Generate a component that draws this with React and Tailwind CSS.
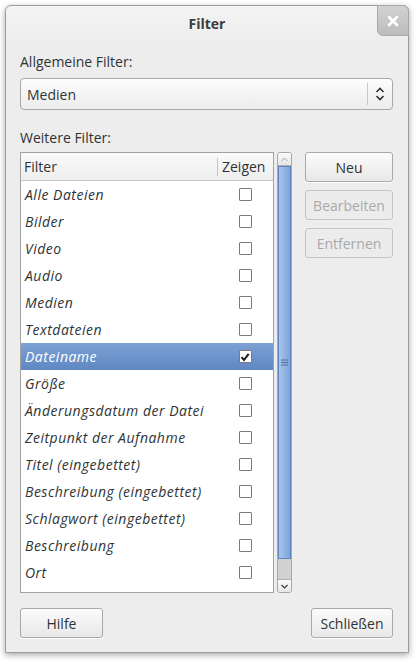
import React from "react";

const rows = [
  "Alle Dateien",
  "Bilder",
  "Video",
  "Audio",
  "Medien",
  "Textdateien",
  "Dateiname",
  "Größe",
  "Änderungsdatum der Datei",
  "Zeitpunkt der Aufnahme",
  "Titel (eingebettet)",
  "Beschreibung (eingebettet)",
  "Schlagwort (eingebettet)",
  "Beschreibung",
  "Ort",
];

function Button({ children, disabled, className = "" }) {
  return (
    <button
      className={
        "h-[30px] rounded-[3px] border text-[14px] " +
        (disabled
          ? "border-[#c4c4c4] bg-[#ececec] text-[#a9a9a9] "
          : "border-[#a8a8a8] bg-gradient-to-b from-[#fcfcfc] to-[#e8e8e8] text-[#2e3436] shadow-[0_1px_0_#fff] ") +
        className
      }
    >
      {children}
    </button>
  );
}

function Check({ checked }) {
  return (
    <div className="w-[13px] h-[13px] border border-[#7a7a7a] bg-white rounded-[1px] flex items-center justify-center">
      {checked && (
        <svg width="10" height="10" viewBox="0 0 10 10">
          <path d="M1.5 5.2 L4 8 L8.7 1.8" fill="none" stroke="#1a1a1a" strokeWidth="2" />
        </svg>
      )}
    </div>
  );
}

export default function App() {
  return (
    <div className="w-[418px] h-[663px] bg-white p-[5px]" style={{ fontFamily: "'Open Sans', 'DejaVu Sans', sans-serif" }}>
      <div className="relative w-[404px] h-[648px] bg-[#ededed] border border-[#9c9c9c] rounded-t-[6px] shadow-[0_2px_6px_rgba(0,0,0,0.35)] flex flex-col">
        <div className="h-[34px] flex items-center justify-center text-[14px] font-bold text-[#3c3c3c] rounded-t-[6px] bg-gradient-to-b from-[#f4f4f4] to-[#ededed]">
          Filter
        </div>
        <div className="absolute right-[-1px] top-[-1px] w-[32px] h-[31px] rounded-bl-[6px] rounded-tr-[6px] bg-gradient-to-b from-[#d2d2d2] to-[#bcbcbc] border border-[#a8a8a8] flex items-center justify-center">
          <svg width="12" height="12" viewBox="0 0 12 12">
            <path d="M2 2 L10 10 M10 2 L2 10" stroke="#fff" strokeWidth="2.6" strokeLinecap="round" />
          </svg>
        </div>

        <div className="pl-[14px] pr-[15px] flex flex-col">
          <div className="mt-[11px] h-[20px] flex items-center text-[14px] text-[#2e3436]">Allgemeine Filter:</div>
          <div className="mt-[7px] h-[32px] rounded-[4px] border border-[#a8a8a8] bg-gradient-to-b from-[#fdfdfd] to-[#ececec] flex items-center">
            <div className="flex-1 pl-[6px] text-[14px] text-[#2e3436]">Medien</div>
            <div className="w-px h-[22px] bg-[#c8c8c8]" />
            <div className="w-[24px] flex items-center justify-center">
              <svg width="10" height="16" viewBox="0 0 10 16">
                <path d="M1.5 6 L5 2.5 L8.5 6 M1.5 10 L5 13.5 L8.5 10" fill="none" stroke="#2e3436" strokeWidth="1.6" />
              </svg>
            </div>
          </div>
          <div className="mt-[17px] h-[20px] flex items-center text-[14px] text-[#2e3436]">Weitere Filter:</div>

          <div className="mt-[5px] flex h-[441px]">
            <div className="w-[254px] border border-[#a2a2a2] bg-white flex flex-col overflow-hidden">
              <div className="h-[28px] flex items-center border-b border-[#c8c8c8] bg-gradient-to-b from-[#fafafa] to-[#eeeeee] text-[14px] text-[#2e3436]">
                <div className="flex-1 pl-[3px]">Filter</div>
                <div className="w-px h-[18px] bg-[#c4c4c4]" />
                <div className="w-[55px] pl-[4px]">Zeigen</div>
              </div>
              {rows.map((r, i) => {
                const sel = r === "Dateiname";
                return (
                  <div
                    key={i}
                    className={
                      "h-[27px] shrink-0 flex items-center text-[14px] italic tracking-[0.5px] " +
                      (sel ? "bg-gradient-to-b from-[#7ea1d6] to-[#5e87c2] text-white" : "text-[#2e3436]")
                    }
                  >
                    <div className="flex-1 pl-[4px] whitespace-nowrap">{r}</div>
                    <div className="w-[56px] flex justify-center">
                      <Check checked={sel} />
                    </div>
                  </div>
                );
              })}
            </div>

            <div className="ml-[3px] w-[15px] flex flex-col rounded-[3px] border border-[#a8a8a8] bg-[#d2d2d2] overflow-hidden">
              <div className="h-[13px] bg-gradient-to-b from-[#fbfbfb] to-[#e6e6e6] border-b border-[#b0b0b0] flex items-center justify-center">
                <svg width="7" height="5" viewBox="0 0 7 5">
                  <path d="M0.5 4 L3.5 1 L6.5 4" fill="none" stroke="#a0a0a0" strokeWidth="1" />
                </svg>
              </div>
              <div className="h-[393px] bg-gradient-to-r from-[#a9c4ea] via-[#92b4e2] to-[#7ea4d8] border border-[#5e86c0] flex items-center justify-center">
                <svg width="7" height="7" viewBox="0 0 7 7">
                  <path d="M0 1 H7 M0 3.5 H7 M0 6 H7" stroke="#4a6fa5" strokeWidth="1" />
                </svg>
              </div>
              <div className="flex-1" />
              <div className="h-[13px] bg-gradient-to-b from-[#fbfbfb] to-[#e6e6e6] border-t border-[#b0b0b0] flex items-center justify-center">
                <svg width="7" height="5" viewBox="0 0 7 5">
                  <path d="M0.5 1 L3.5 4 L6.5 1" fill="none" stroke="#3a3a3a" strokeWidth="1.2" />
                </svg>
              </div>
            </div>

            <div className="ml-[13px] flex-1 flex flex-col gap-[8px]">
              <Button>Neu</Button>
              <Button disabled>Bearbeiten</Button>
              <Button disabled>Entfernen</Button>
            </div>
          </div>

          <div className="mt-[15px] flex justify-between">
            <Button className="w-[83px]">Hilfe</Button>
            <Button className="w-[82px]">Schließen</Button>
          </div>
        </div>
      </div>
    </div>
  );
}
